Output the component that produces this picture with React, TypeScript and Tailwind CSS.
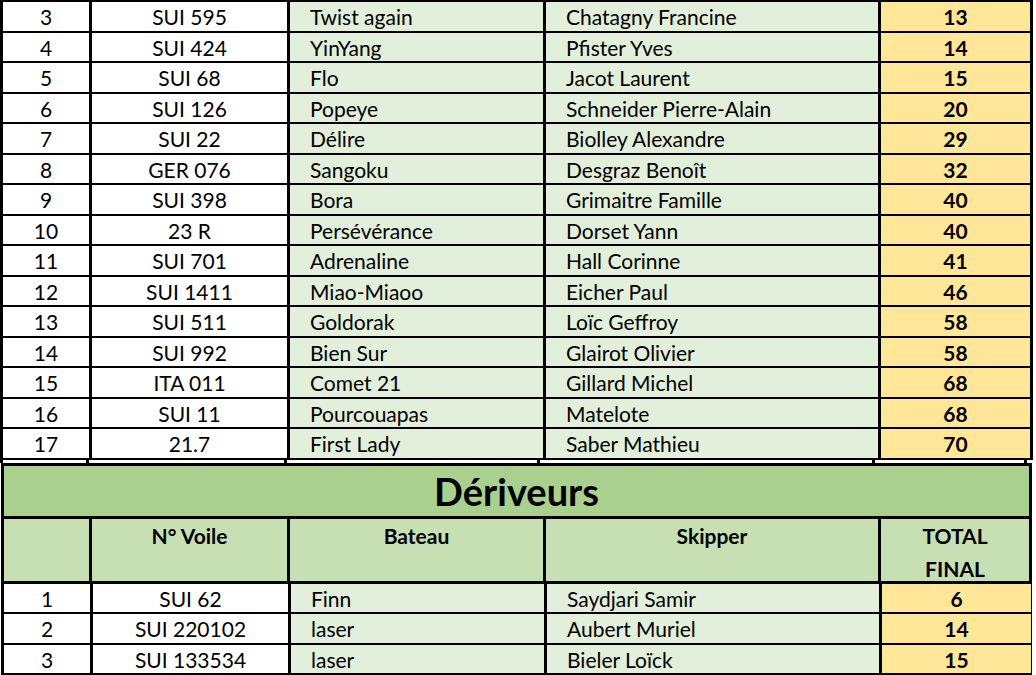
import React from 'react';

type Row = {
  rank: string;
  sail: string;
  boat: string;
  skipper: string;
  total: string;
};

const topRows: Row[] = [
  { rank: '3', sail: 'SUI 595', boat: 'Twist again', skipper: 'Chatagny Francine', total: '13' },
  { rank: '4', sail: 'SUI 424', boat: 'YinYang', skipper: 'Pfister Yves', total: '14' },
  { rank: '5', sail: 'SUI 68', boat: 'Flo', skipper: 'Jacot Laurent', total: '15' },
  { rank: '6', sail: 'SUI 126', boat: 'Popeye', skipper: 'Schneider Pierre-Alain', total: '20' },
  { rank: '7', sail: 'SUI 22', boat: 'Délire', skipper: 'Biolley Alexandre', total: '29' },
  { rank: '8', sail: 'GER 076', boat: 'Sangoku', skipper: 'Desgraz Benoît', total: '32' },
  { rank: '9', sail: 'SUI 398', boat: 'Bora', skipper: 'Grimaitre Famille', total: '40' },
  { rank: '10', sail: '23 R', boat: 'Persévérance', skipper: 'Dorset Yann', total: '40' },
  { rank: '11', sail: 'SUI 701', boat: 'Adrenaline', skipper: 'Hall Corinne', total: '41' },
  { rank: '12', sail: 'SUI 1411', boat: 'Miao-Miaoo', skipper: 'Eicher Paul', total: '46' },
  { rank: '13', sail: 'SUI 511', boat: 'Goldorak', skipper: 'Loïc Geffroy', total: '58' },
  { rank: '14', sail: 'SUI 992', boat: 'Bien Sur', skipper: 'Glairot Olivier', total: '58' },
  { rank: '15', sail: 'ITA 011', boat: 'Comet 21', skipper: 'Gillard Michel', total: '68' },
  { rank: '16', sail: 'SUI 11', boat: 'Pourcouapas', skipper: 'Matelote', total: '68' },
  { rank: '17', sail: '21.7', boat: 'First Lady', skipper: 'Saber Mathieu', total: '70' },
];

const dinghyRows: Row[] = [
  { rank: '1', sail: 'SUI 62', boat: 'Finn', skipper: 'Saydjari Samir', total: '6' },
  { rank: '2', sail: 'SUI 220102', boat: 'laser', skipper: 'Aubert Muriel', total: '14' },
  { rank: '3', sail: 'SUI 133534', boat: 'laser', skipper: 'Bieler Loïck', total: '15' },
];

const ResultRow = ({ row, tall }: { row: Row; tall: boolean }) => (
  <div className={`flex border-b-2 border-black ${tall ? 'h-[31px]' : 'h-[30px]'}`}>
    <div className="flex w-[89px] shrink-0 items-center justify-center border-r-[3px] border-black bg-white">
      {row.rank}
    </div>
    <div className="flex w-[198px] shrink-0 items-center justify-center border-r-[3px] border-black bg-white">
      {row.sail}
    </div>
    <div className="flex w-[256px] shrink-0 items-center border-r-[3px] border-black bg-[#e2efda] pl-5">
      {row.boat}
    </div>
    <div className="flex w-[335px] shrink-0 items-center border-r-[3px] border-black bg-[#e2efda] pl-5">
      {row.skipper}
    </div>
    <div className="flex w-[149px] shrink-0 items-center justify-center bg-[#ffe699] font-bold">
      {row.total}
    </div>
  </div>
);

export default function App() {
  return (
    <div
      className="h-[675px] w-[1036px] overflow-hidden bg-white text-[21px] leading-none text-black"
      style={{ fontFamily: 'Lato, "Open Sans", sans-serif' }}
    >
      {/* Classes habitables (suite) */}
      <div className="w-[1033px] border-x-[3px] border-t-2 border-black">
        {topRows.map((row, i) => (
          <ResultRow key={row.rank} row={row} tall={i % 2 === 0} />
        ))}
      </div>
      {/* next row peeking below */}
      <div className="flex h-[3px] w-[1033px]">
        <div className="w-[89px] border-x-[3px] border-black" />
        <div className="w-[198px] border-r-[3px] border-black" />
        <div className="w-[253px] border-r-[3px] border-black" />
        <div className="w-[335px] border-r-[3px] border-black" />
        <div className="w-[152px] border-r-[3px] border-black" />
      </div>

      {/* Dériveurs */}
      <div className="ml-px w-[1031px] border-x-[3px] border-t-[3px] border-black">
        <div className="flex h-[53px] items-center justify-center border-b-[3px] border-black bg-[#a9d08e] text-[38px] font-bold">
          Dériveurs
        </div>
        <div className="flex h-[65px] border-b-[3px] border-black bg-[#c6e0b4] font-bold leading-[33px]">
          <div className="w-[88px] shrink-0 border-r-[3px] border-black" />
          <div className="w-[198px] shrink-0 border-r-[3px] border-black text-center">N° Voile</div>
          <div className="w-[256px] shrink-0 border-r-[3px] border-black text-center">Bateau</div>
          <div className="w-[335px] shrink-0 border-r-[3px] border-black text-center">Skipper</div>
          <div className="flex-1 text-center">
            TOTAL
            <br />
            FINAL
          </div>
        </div>
        {dinghyRows.map((row, i) => (
          <ResultRow key={row.rank} row={row} tall={i === 1} />
        ))}
      </div>
    </div>
  );
}
